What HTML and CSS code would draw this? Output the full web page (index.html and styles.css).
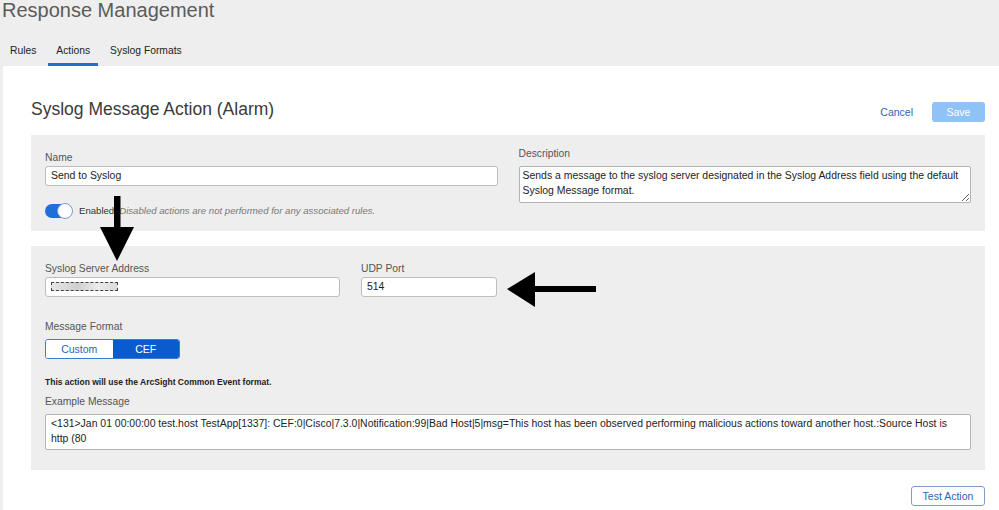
FILE: index.html
```html
<!DOCTYPE html>
<html lang="en">
<head>
<meta charset="utf-8">
<title>Response Management</title>
<link rel="stylesheet" href="styles.css">
</head>
<body>
<div class="app">
  <header class="top">
    <h1 class="title">Response Management</h1>
    <nav class="tabs">
      <a class="tab">Rules</a>
      <a class="tab active">Actions</a>
      <a class="tab">Syslog Formats</a>
    </nav>
  </header>
  <main class="page">
    <div class="page-head">
      <h2 class="heading">Syslog Message Action (Alarm)</h2>
      <div class="head-actions">
        <button class="btn-link">Cancel</button>
        <button class="btn-primary">Save</button>
      </div>
    </div>

    <section class="panel panel-general">
      <div class="col">
        <label class="lbl">Name</label>
        <div class="input">Send to Syslog</div>
        <div class="toggle-row">
          <span class="toggle"><span class="knob"></span></span>
          <span class="en">Enabled</span>
          <span class="hint">Disabled actions are not performed for any associated rules.</span>
        </div>
      </div>
      <div class="col">
        <label class="lbl lbl-desc">Description</label>
        <textarea class="ta ta-desc" wrap="off" readonly>Sends a message to the syslog server designated in the Syslog Address field using the default
Syslog Message format.</textarea>
      </div>
    </section>

    <section class="panel panel-syslog">
      <div class="row-fields">
        <div class="field f-addr">
          <label class="lbl">Syslog Server Address</label>
          <div class="input"><span class="mask"></span></div>
        </div>
        <div class="field f-port">
          <label class="lbl">UDP Port</label>
          <div class="input">514</div>
        </div>
      </div>
      <label class="lbl lbl-format">Message Format</label>
      <div class="seg">
        <span class="seg-item">Custom</span>
        <span class="seg-item on">CEF</span>
      </div>
      <p class="note">This action will use the ArcSight Common Event format.</p>
      <label class="lbl lbl-example">Example Message</label>
      <div class="ta ta-example">
        <span class="ln">&lt;131&gt;Jan 01 00:00:00 test.host TestApp[1337]: CEF:0|Cisco|7.3.0|Notification:99|Bad Host|5|msg=This host has been observed performing malicious actions toward another host.:Source Host is</span>
        <span class="ln">http (80</span>
      </div>
    </section>

    <div class="foot">
      <button class="btn-outline">Test Action</button>
    </div>
  </main>

  <svg class="annot" width="999" height="510" viewBox="0 0 999 510" aria-hidden="true">
    <rect x="114" y="196" width="6.5" height="32" fill="#000"/>
    <polygon points="100,227 134,227 117,261" fill="#000"/>
    <polygon points="507,289 535,272 535,307" fill="#000"/>
    <rect x="533" y="286" width="63" height="6" fill="#000"/>
  </svg>
</div>
</body>
</html>
```

FILE: styles.css
```css
* { box-sizing: border-box; }

html, body {
  margin: 0;
  padding: 0;
  background: #eeeeee;
}

body {
  font-family: "Liberation Sans", Arial, sans-serif;
  color: #222;
}

.app {
  position: relative;
  width: 999px;
  height: 510px;
  overflow: hidden;
  display: flex;
  flex-direction: column;
}

/* header */
.title {
  margin: 0;
  padding-left: 2px;
  font-size: 20px;
  line-height: 20px;
  font-weight: normal;
  color: #5b5b5b;
}

.tabs {
  display: flex;
  gap: 4px;
  margin-top: 18px;
  padding-left: 2px;
}

.tab {
  padding: 6px 8px 5px;
  font-size: 10.3px;
  line-height: 14px;
  color: #222;
  border-bottom: 3px solid transparent;
}

.tab.active {
  border-bottom-color: #1f6fd2;
}

/* page */
.page {
  flex: 1;
  margin-left: 3px;
  background: #ffffff;
  padding: 36px 14px 0 28px;
}

.page-head {
  display: flex;
  align-items: flex-start;
  justify-content: space-between;
  height: 20px;
}

.heading {
  margin: -3px 0 0;
  font-size: 17.5px;
  line-height: 20px;
  font-weight: normal;
  color: #3a3a3a;
}

.head-actions {
  display: flex;
  align-items: center;
  gap: 19px;
  height: 20px;
}

button {
  font-family: "Liberation Sans", Arial, sans-serif;
  cursor: pointer;
}

.btn-link {
  border: 0;
  background: none;
  padding: 0;
  font-size: 10.5px;
  color: #2a67b8;
}

.btn-primary {
  width: 53px;
  height: 20px;
  border: 0;
  border-radius: 3px;
  background: #8fc2f7;
  color: #ffffff;
  font-size: 10.5px;
  padding: 0;
}

/* panels */
.panel {
  background: #eeeeee;
}

.panel-general {
  margin-top: 13px;
  padding: 16px 14px 13px;
  display: grid;
  grid-template-columns: 1fr 1fr;
  column-gap: 21px;
}

.panel-syslog {
  margin-top: 15px;
  padding: 16px 14px 20px;
}

.col, .field {
  display: flex;
  flex-direction: column;
}

.lbl {
  display: block;
  font-size: 10.3px;
  line-height: 13px;
  color: #555;
  margin-bottom: 2px;
}

.lbl-desc {
  margin-top: -4px;
  margin-bottom: 6px;
}

.input {
  height: 20px;
  background: #fff;
  border: 1px solid #bdbdbd;
  border-radius: 3px;
  padding: 0 5px;
  font-size: 10.45px;
  line-height: 18px;
  color: #222;
}

.toggle-row {
  display: flex;
  align-items: center;
  margin-top: 17px;
  height: 15px;
}

.toggle {
  position: relative;
  width: 27px;
  height: 14px;
  border-radius: 7px;
  background: #1f6fd8;
  flex: none;
}

.knob {
  position: absolute;
  right: -1px;
  top: -1px;
  width: 16px;
  height: 16px;
  border-radius: 50%;
  background: #fff;
  border: 1px solid #7f9cc4;
}

.en {
  margin-left: 7px;
  font-size: 9.6px;
  color: #333;
}

.hint {
  margin-left: 5px;
  font-size: 9.6px;
  font-style: italic;
  color: #777;
}

.ta {
  display: block;
  background: #fff;
  border: 1px solid #b3b3b3;
  border-radius: 2px;
  font-family: "Liberation Sans", Arial, sans-serif;
  font-size: 10.45px;
  line-height: 15px;
  color: #222;
  overflow: hidden;
}

.ta-desc {
  width: 100%;
  height: 37px;
  padding: 1px 3px;
  margin: 0;
  resize: vertical;
  white-space: pre;
}

.ta-example {
  height: 36px;
  padding: 1px 5px;
}

.ln {
  display: block;
  white-space: nowrap;
}

.row-fields {
  display: flex;
  gap: 21px;
}

.f-addr { width: 295px; }
.f-port { width: 136px; }

.mask {
  display: inline-block;
  vertical-align: middle;
  margin-top: -2px;
  width: 67px;
  height: 9px;
  border: 1px dashed #444;
  background: linear-gradient(90deg, #e6e6e6, #cfcfcf 40%, #ececec 70%, #dadada);
}

.lbl-format {
  margin-top: 23px;
  margin-bottom: 6px;
}

.seg {
  display: flex;
  width: 135px;
  height: 20px;
  border: 1px solid #3c7bd2;
  border-radius: 3px;
  overflow: hidden;
}

.seg-item {
  flex: 1;
  text-align: center;
  font-size: 10.5px;
  line-height: 18px;
  color: #2a66bd;
  background: #fff;
}

.seg-item.on {
  background: #0a5bcc;
  color: #ffffff;
}

.note {
  margin: 18px 0 0;
  font-size: 8.5px;
  line-height: 11px;
  font-weight: bold;
  color: #222;
}

.lbl-example {
  margin-top: 7px;
  margin-bottom: 6px;
}

.foot {
  display: flex;
  justify-content: flex-end;
  margin-top: 16px;
}

.btn-outline {
  width: 74px;
  height: 20px;
  padding: 0;
  background: #fff;
  border: 1px solid #7d9cc7;
  border-radius: 3px;
  font-size: 10.5px;
  color: #2a63b0;
}

/* annotation overlay */
.annot {
  position: absolute;
  left: 0;
  top: 0;
  pointer-events: none;
}
```
